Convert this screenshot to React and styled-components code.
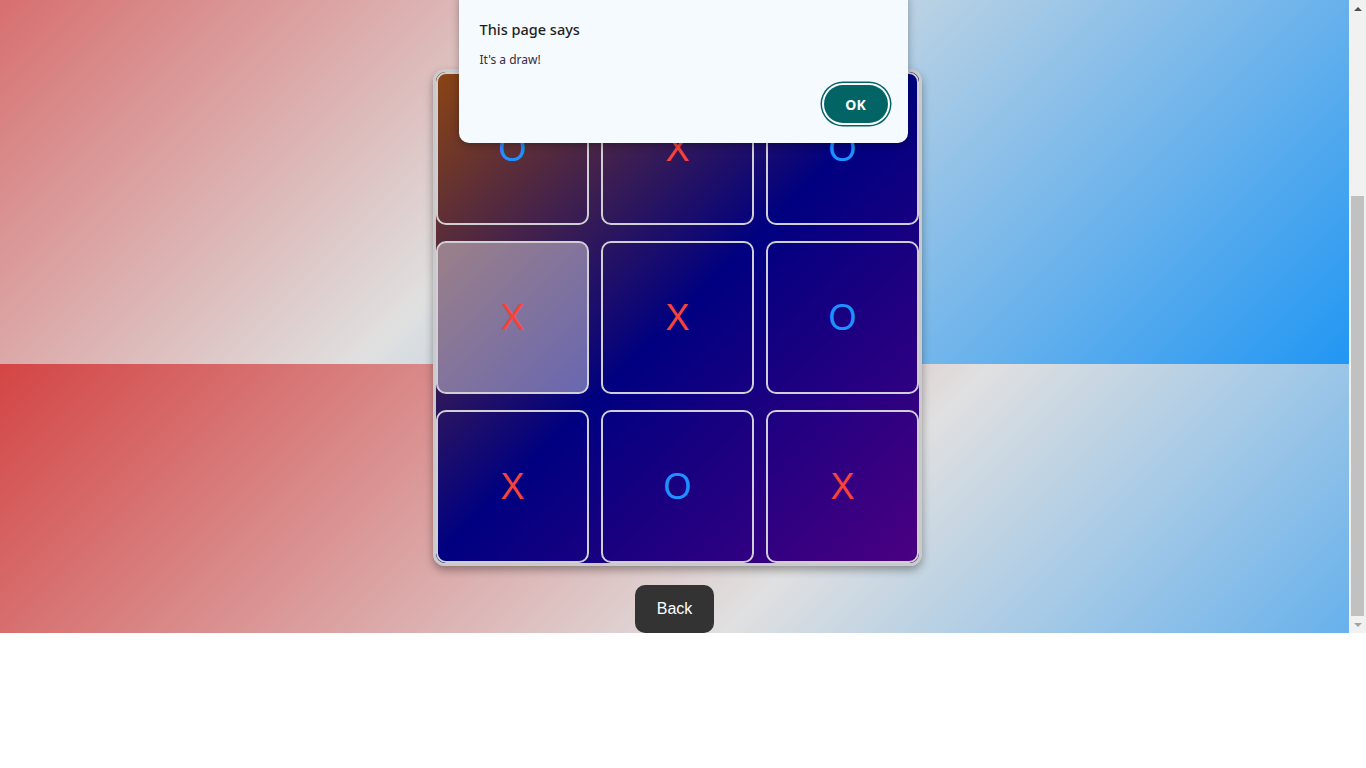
import React, { useLayoutEffect, useRef } from 'react';
import styled, { createGlobalStyle } from 'styled-components';

const GlobalStyle = createGlobalStyle`
  html, body {
    margin: 0;
    padding: 0;
    overflow: hidden;
    background: #fff;
  }
  * {
    box-sizing: border-box;
  }
`;

const Screen = styled.div`
  position: relative;
  display: flex;
  height: 633px;
`;

const Viewport = styled.div`
  flex: 1;
  height: 633px;
  overflow-y: scroll;
  scrollbar-width: none;
  font-family: 'Liberation Sans', Arial, sans-serif;

  &::-webkit-scrollbar {
    display: none;
  }
`;

const ScrollRail = styled.div`
  display: flex;
  flex-direction: column;
  width: 17px;
  background: #f1f1f1;
`;

const RailButton = styled.div`
  display: flex;
  align-items: center;
  justify-content: center;
  height: 17px;
  flex-shrink: 0;

  &::before {
    content: '';
    width: 0;
    height: 0;
    border-left: 4px solid transparent;
    border-right: 4px solid transparent;
    ${(p) =>
      p.$down
        ? 'border-top: 4px solid #a3a3a3;'
        : 'border-bottom: 4px solid #505050;'}
  }
`;

const RailTrack = styled.div`
  flex: 1;
  display: flex;
  flex-direction: column;
  justify-content: flex-end;
  padding: 0 2px;
`;

const RailThumb = styled.div`
  height: 420px;
  background: #c1c1c1;
`;

const Page = styled.main`
  display: flex;
  flex-direction: column;
  align-items: center;
  height: 902px;
  padding-top: 338px;
  background-image: linear-gradient(135deg, #d44545, #e0e0e0, #2196f3);
  background-size: 100% 633px;
  background-repeat: repeat-y;
`;

const Board = styled.div`
  display: grid;
  grid-template-columns: repeat(3, 153px);
  grid-template-rows: repeat(3, 153px);
  column-gap: 12px;
  row-gap: 16px;
  margin-left: 6px;
  border: 3px solid #cacaca;
  border-radius: 12px;
  overflow: hidden;
  background: linear-gradient(135deg, #8b4513, #000080 50%, #4b0082);
  box-shadow: 0 4px 8px rgba(0, 0, 0, 0.35);
`;

const Cell = styled.button`
  display: flex;
  align-items: center;
  justify-content: center;
  padding: 0;
  border: 2px solid #cfcfd4;
  border-radius: 10px;
  background: ${(p) => (p.$active ? 'rgba(255, 255, 255, 0.4)' : 'transparent')};
  color: ${(p) => (p.$mark === 'X' ? '#f84339' : '#1e90ff')};
  font-family: 'Liberation Sans', Arial, sans-serif;
  font-size: 36px;
  cursor: pointer;
`;

const BackButton = styled.button`
  margin-top: 19px;
  padding: 14px 22px;
  border: none;
  border-radius: 10px;
  background: #333;
  color: #fff;
  font-family: 'Liberation Sans', Arial, sans-serif;
  font-size: 16px;
  line-height: 20px;
  cursor: pointer;
`;

const Dialog = styled.div`
  position: absolute;
  top: -10px;
  left: calc(50% - 224.5px);
  width: 449px;
  padding: 29px 20px 20px 21px;
  border-radius: 10px;
  background: #f5faff;
  box-shadow: 0 2px 8px rgba(0, 0, 0, 0.3);
  font-family: 'Noto Sans', 'Open Sans', sans-serif;
`;

const DialogTitle = styled.div`
  font-size: 14.5px;
  font-weight: 500;
  line-height: 20px;
  color: #1f1f1f;
`;

const DialogText = styled.div`
  margin-top: 12px;
  font-size: 12px;
  line-height: 18px;
  color: #3a2a3a;
`;

const DialogFooter = styled.div`
  display: flex;
  justify-content: flex-end;
  margin-top: 16px;
`;

const OkButton = styled.button`
  width: 64px;
  height: 38px;
  border: none;
  border-radius: 19px;
  background: #036466;
  box-shadow: 0 0 0 2px #fff, 0 0 0 3.5px #036466;
  color: #fff;
  font-family: 'Noto Sans', 'Open Sans', sans-serif;
  font-size: 14px;
  font-weight: 700;
  cursor: pointer;
`;

const cells = ['O', 'X', 'O', 'X', 'X', 'O', 'X', 'O', 'X'];

export default function App() {
  const viewRef = useRef(null);

  useLayoutEffect(() => {
    const el = viewRef.current;
    if (el) el.scrollTop = el.scrollHeight;
  }, []);

  return (
    <>
      <GlobalStyle />
      <Screen>
        <Viewport ref={viewRef}>
          <Page>
            <Board>
              {cells.map((mark, i) => (
                <Cell key={i} $mark={mark} $active={i === 3}>
                  {mark}
                </Cell>
              ))}
            </Board>
            <BackButton>Back</BackButton>
          </Page>
        </Viewport>
        <ScrollRail>
          <RailButton />
          <RailTrack>
            <RailThumb />
          </RailTrack>
          <RailButton $down />
        </ScrollRail>
        <Dialog>
          <DialogTitle>This page says</DialogTitle>
          <DialogText>It's a draw!</DialogText>
          <DialogFooter>
            <OkButton>OK</OkButton>
          </DialogFooter>
        </Dialog>
      </Screen>
    </>
  );
}
